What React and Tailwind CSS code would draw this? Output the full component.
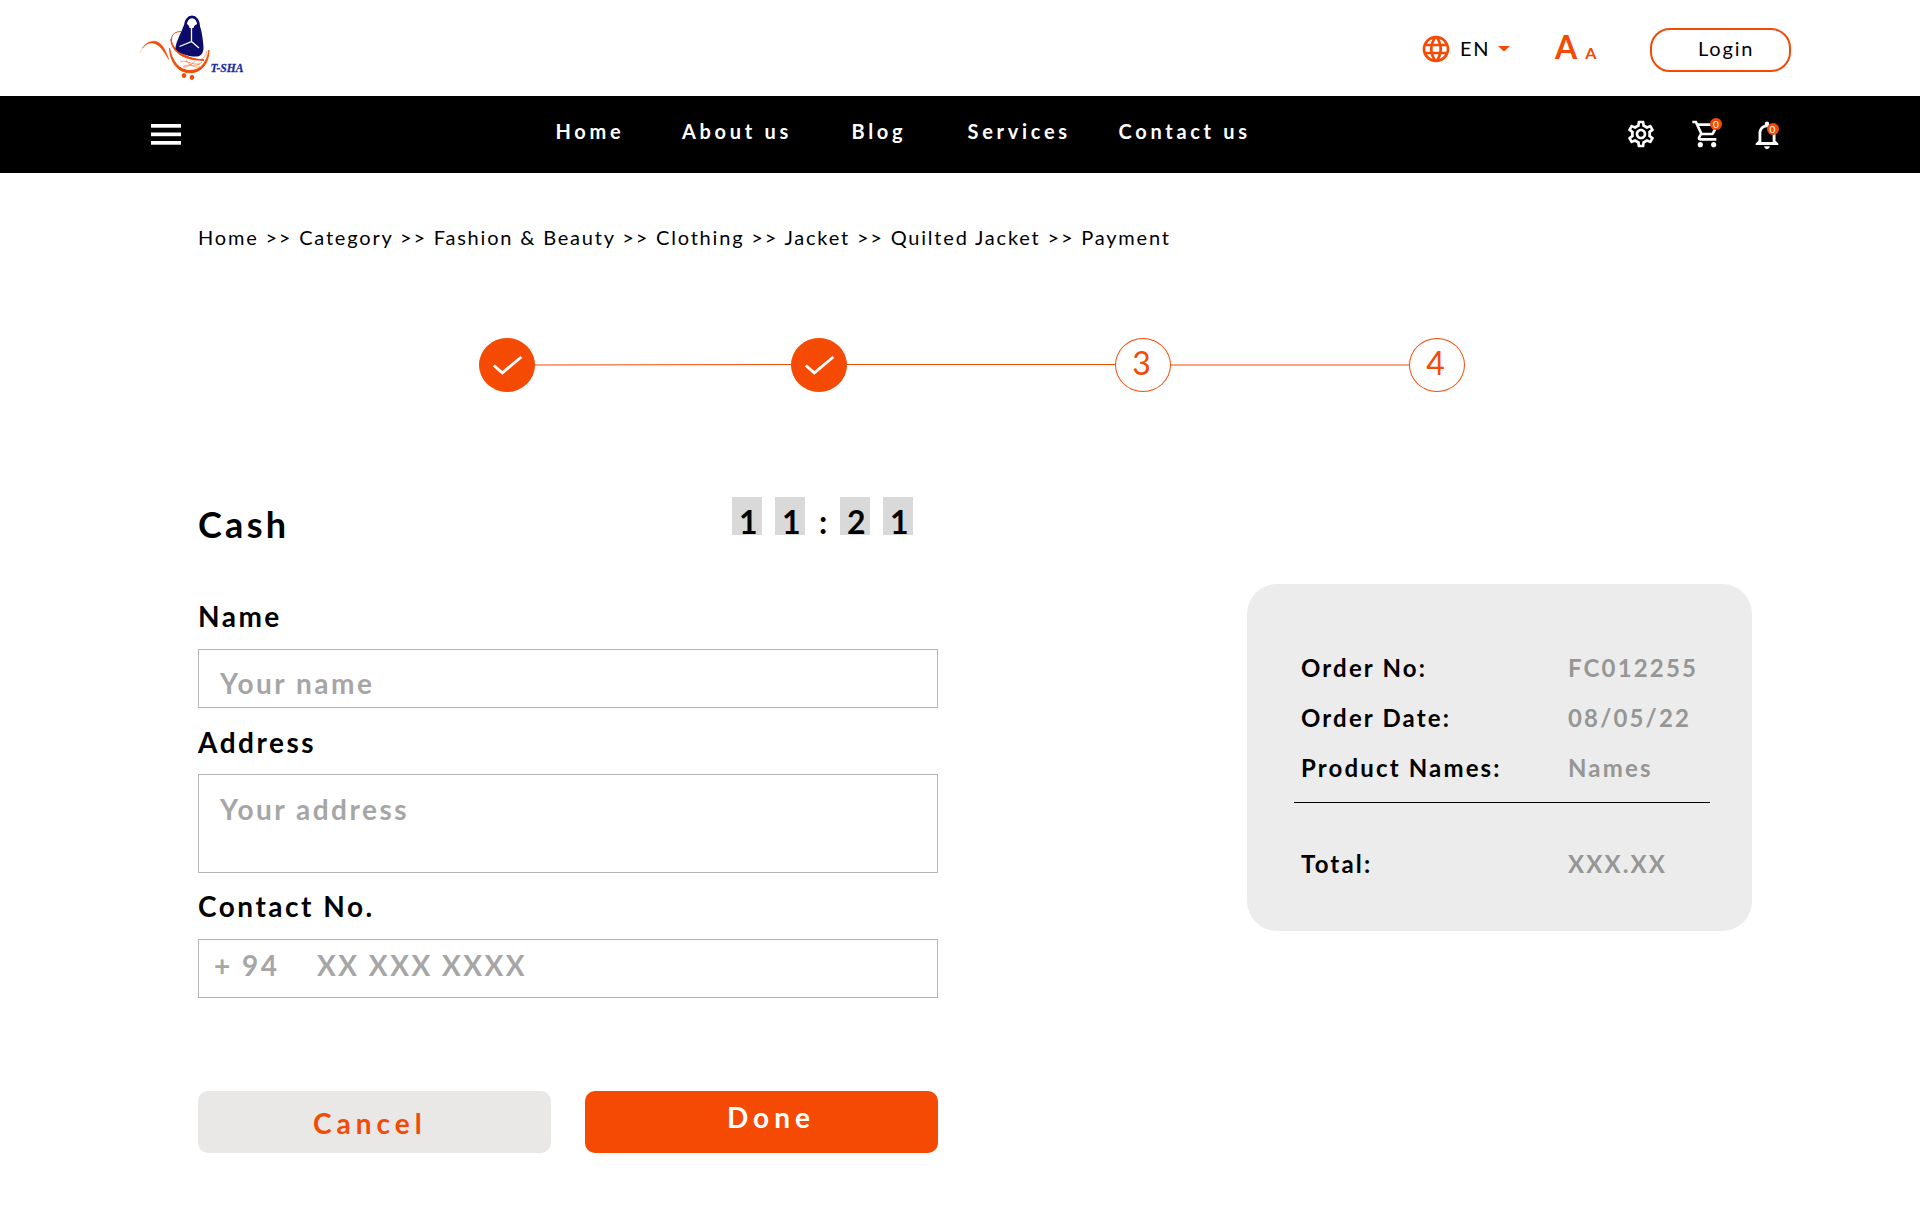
import React from "react";
import {
  MdLanguage,
  MdOutlineSettings,
  MdOutlineShoppingCart,
  MdNotificationsNone,
} from "react-icons/md";

function Logo() {
  return (
    <svg className="ml-[130px] h-[96px] w-[130px]" viewBox="0 0 130 96" fill="none">
      <path d="M12.500 48C16 43 20 41 24.500 41.300C31.500 41.700 35.500 50 38.800 59.500C33.500 51 30 44.500 23.500 43.200C19 42.300 15.500 44.500 12.500 48Z" fill="#f54a04" stroke="#f54a04" strokeWidth=".5" />
      <path d="M13 47.500L9.800 53" stroke="#f54a04" strokeWidth=".8" opacity=".35" />
      <path d="M51 31.500C41 31.500 39 40 44 47C50 55 62 60 74 60" stroke="#f54a04" strokeWidth="1" />
      <path d="M41 39C41 48 52 58.500 74 60C56 61 41 53 41 39Z" fill="#f54a04" stroke="#f54a04" strokeWidth="1" />
      <path d="M39.500 48C40 62 48 72.800 60 72.800C71 72.800 79 64 79 50C77 62 71 70.500 60 70.500C49 70.500 42 61 39.500 48Z" fill="#f54a04" stroke="#f54a04" strokeWidth=".9" />
      <path d="M71 59.500C74 58.500 76.500 55 77 51" stroke="#f54a04" strokeWidth=".8" opacity=".7" />
      <path d="M50 62C55 59 61 65 70 64M53 67C59 62 65 69 72 62M56 60C58 64 64 68 70 67M65 61C62 64 58 67 54 67" stroke="#f54a04" strokeWidth=".7" opacity=".7" />
      <ellipse cx="54" cy="75.500" rx="2.200" ry="2.600" fill="#f54a04" />
      <ellipse cx="62" cy="77.300" rx="2.200" ry="2.600" fill="#f54a04" />
      <path d="M55.500 27C54.500 13.500 69.500 13.500 68.500 27" stroke="#0b0b6b" strokeWidth="2.600" />
      <path d="M54 25C51 33 45 44 45.500 49C49 53.500 59 57 67 56.500C72 56 73.500 52 73.500 47C73 40 72 31 69.500 25C67 23.500 64.500 24.500 63.500 28H59.500C59 24 56 23 54 25Z" fill="#0b0b6b" />
      <path d="M61.500 27V41.500L49.500 46.500M61.500 41.500L69 48" stroke="white" strokeWidth="1.300" />
      <text x="80.500" y="72.300" fill="#1a2aa5" stroke="#1a2aa5" strokeWidth=".3" fontFamily="Liberation Serif, serif" fontStyle="italic" fontWeight="700" fontSize="13" textLength="33" lengthAdjust="spacingAndGlyphs">T-SHA</text>
    </svg>
  );
}

function Header() {
  return (
    <header className="flex h-[96px] items-start">
      <Logo />
      <MdLanguage className="mt-[33px] ml-[1160px] size-8 text-[#f54a04]" />
      <span className="mt-[36px] ml-[8px] w-[34px] leading-6 tracking-[1.800px]">EN</span>
      <svg className="mt-[46px] ml-[4px] h-[6px] w-[12px]" viewBox="0 0 12 6"><path d="M0 0H12L6 5.500Z" fill="#f54a04" /></svg>
      <div className="mt-[28px] ml-[45px] flex w-[95px] items-baseline gap-[8px] font-bold text-[#f54a04]">
        <span className="text-[32px] leading-[38px]">A</span>
        <span className="text-[16px]">A</span>
      </div>
      <button className="mt-[28px] flex h-[44px] w-[141px] rounded-[20px] border-2 border-[#f54a04] pt-[6px] pl-[46px] leading-6 tracking-[1.800px]">
        Login
      </button>
    </header>
  );
}

function Badge({ className }) {
  return (
    <span className={"absolute flex size-3 items-center justify-center rounded-full bg-[#f54a04] text-[10px] leading-none text-white " + className}>
      0
    </span>
  );
}

function Nav() {
  return (
    <nav className="flex h-[77px] items-start bg-black text-white">
      <svg className="mt-[28px] ml-[151px] h-[21px] w-[30px]" viewBox="0 0 30 21" fill="white">
        <rect width="30" height="3.700" />
        <rect y="8.500" width="30" height="3.700" />
        <rect y="17" width="30" height="3.700" />
      </svg>
      <div className="mt-[23px] ml-[374.500px] flex w-[1069px] leading-6 font-bold tracking-[3.700px]">
        <span className="w-[126.500px]">Home</span>
        <span className="w-[169.500px]">About us</span>
        <span className="w-[116px]">Blog</span>
        <span className="w-[151px]">Services</span>
        <span>Contact us</span>
      </div>
      <div className="mt-[22px] flex">
        <MdOutlineSettings className="size-8" />
        <div className="relative ml-[34px]">
          <MdOutlineShoppingCart className="size-8" />
          <Badge className="top-[0px] left-[19.500px]" />
        </div>
        <div className="relative ml-[27px]">
          <MdNotificationsNone className="size-[34px]" />
          <Badge className="top-[5px] left-[17px]" />
        </div>
      </div>
    </nav>
  );
}

function Step({ children, done }) {
  return (
    <div className={"flex h-[54px] w-[56px] justify-center rounded-[50%] border border-[#f54a04] text-[32px] leading-[48px] text-[#f54a04] " + (done ? "bg-[#f54a04]" : "pr-[3px]")}>
      {done ? (
        <svg className="h-[52px] w-[54px] shrink-0" viewBox="1 1 54 52" fill="none">
          <path d="M14.800 27.500L23.300 34.800L42.300 19" stroke="white" strokeWidth="2.800" />
        </svg>
      ) : children}
    </div>
  );
}

function Steps() {
  return (
    <div className="mt-[89px] ml-[479px] flex h-[54px]">
      <Step done />
      <svg className="h-[54px] w-[256px]" viewBox="0 0 256 54"><path d="M0 27L256 26.500" stroke="#f54a04" /></svg>
      <Step done />
      <i className="mt-[26px] h-px w-[268px] bg-[#f54a04]" />
      <Step>3</Step>
      <i className="mt-[26px] h-[2px] w-[238px] bg-[#f54a04]/50" />
      <Step>4</Step>
    </div>
  );
}

function Digit({ children }) {
  return <span className="h-[38px] w-[30px] bg-[#d9d9d9] pl-[7px] leading-[50px]">{children}</span>;
}

function Label({ children, className }) {
  return <label className={"block text-[28px] leading-[34px] font-bold tracking-[2.500px] " + className}>{children}</label>;
}

function Field({ children, className }) {
  return <div className={"border border-[#b5b5b5] text-[28px] leading-[34px] font-bold tracking-[2.500px] text-[#a6a6a6] " + className}>{children}</div>;
}

function Form() {
  return (
    <section className="w-[740px]">
      <div className="flex h-[102px]">
        <h1 className="w-[534px] pt-[5px] text-[36px] leading-[44px] font-bold tracking-[3.300px]">Cash</h1>
        <div className="flex text-[32px] font-bold">
          <Digit>1</Digit>
          <span className="w-[13px]" />
          <Digit>1</Digit>
          <span className="w-[35px] pl-[14px] leading-[50px]">:</span>
          <Digit>2</Digit>
          <span className="w-[13px]" />
          <Digit>1</Digit>
        </div>
      </div>
      <Label className="mb-[16px]">Name</Label>
      <Field className="h-[59px] pt-[16px] pl-[21px]">Your name</Field>
      <Label className="mt-[17px] mb-[15px]">Address</Label>
      <Field className="h-[99px] pt-[17px] pl-[21px]">Your address</Field>
      <Label className="mt-[16px] mb-[16px]">Contact No.</Label>
      <Field className="flex h-[59px] pt-[8px] pl-[15px]">
        <span className="w-[103px]">+ 94</span>
        <span>XX XXX XXXX</span>
      </Field>
      <div className="mt-[93px] flex gap-[34px] text-[28px] leading-[34px] font-bold tracking-[5px]">
        <button className="flex h-[62px] w-[353px] rounded-[10px] bg-[#eae8e6] pt-[15px] pl-[115px] text-[#f54a04]">Cancel</button>
        <button className="flex h-[62px] w-[353px] rounded-[10px] bg-[#f54a04] pt-[9px] pl-[142px] text-white">Done</button>
      </div>
    </section>
  );
}

function Row({ label, value }) {
  return (
    <div className="flex pl-[7px]">
      <span className="w-[267px]">{label}</span>
      <span className="text-[#969696]">{value}</span>
    </div>
  );
}

function Summary() {
  return (
    <aside className="mt-[87px] ml-[309px] h-[347px] w-[505px] rounded-[30px] bg-[#ececec] pt-[59px] pl-[47px] text-[24px] leading-[50px] font-bold tracking-[2.150px]">
      <Row label="Order No:" value="FC012255" />
      <Row label="Order Date:" value="08/05/22" />
      <Row label="Product Names:" value="Names" />
      <hr className="mt-[9px] mb-[36px] w-[416px] border-black" />
      <Row label="Total:" value="XXX.XX" />
    </aside>
  );
}

export default function App() {
  return (
    <div className="h-[1206px] w-[1920px] overflow-hidden bg-white font-['Lato',sans-serif] text-[20px] text-black">
      <Header />
      <Nav />
      <p className="mt-[52px] ml-[198px] leading-6 tracking-[1.800px]">
        Home &gt;&gt; Category &gt;&gt; Fashion &amp; Beauty &gt;&gt; Clothing &gt;&gt; Jacket &gt;&gt; Quilted Jacket &gt;&gt; Payment
      </p>
      <Steps />
      <main className="mt-[105px] ml-[198px] flex items-start">
        <Form />
        <Summary />
      </main>
    </div>
  );
}
